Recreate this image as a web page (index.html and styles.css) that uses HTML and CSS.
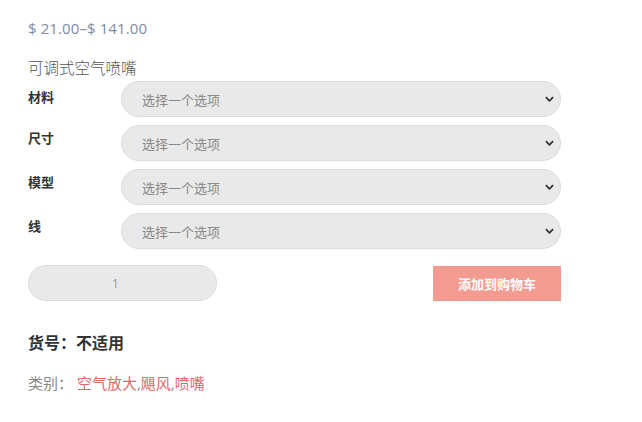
FILE: index.html
```html
<!DOCTYPE html>
<html lang="zh">
<head>
<meta charset="utf-8">
<link rel="stylesheet" href="styles.css">
</head>
<body>
<div class="summary">
  <p class="price">$ 21.00–$ 141.00</p>
  <p class="title">可调式空气喷嘴</p>
  <div class="variations">
    <div class="row">
      <label class="lbl">材料</label>
      <div class="sel"><select><option>选择一个选项</option></select><svg class="chev" viewBox="0 0 10 6"><path d="M1 1l4 4 4-4" fill="none" stroke="#333" stroke-width="2"/></svg></div>
    </div>
    <div class="row">
      <label class="lbl">尺寸</label>
      <div class="sel"><select><option>选择一个选项</option></select><svg class="chev" viewBox="0 0 10 6"><path d="M1 1l4 4 4-4" fill="none" stroke="#333" stroke-width="2"/></svg></div>
    </div>
    <div class="row">
      <label class="lbl">模型</label>
      <div class="sel"><select><option>选择一个选项</option></select><svg class="chev" viewBox="0 0 10 6"><path d="M1 1l4 4 4-4" fill="none" stroke="#333" stroke-width="2"/></svg></div>
    </div>
    <div class="row">
      <label class="lbl">线</label>
      <div class="sel"><select><option>选择一个选项</option></select><svg class="chev" viewBox="0 0 10 6"><path d="M1 1l4 4 4-4" fill="none" stroke="#333" stroke-width="2"/></svg></div>
    </div>
  </div>
  <div class="cart">
    <input class="qty" type="text" value="1">
    <button class="add">添加到购物车</button>
  </div>
  <p class="sku">货号：不适用</p>
  <p class="cats">类别： <a href="#">空气放大</a>,<a href="#">飓风</a>,<a href="#">喷嘴</a></p>
</div>
</body>
</html>
```

FILE: styles.css
```css
* { box-sizing: border-box; }
body {
  margin: 0;
  background: #fff;
  font-family: "Open Sans", "Noto Sans CJK SC", sans-serif;
  color: #555;
}
.summary {
  width: 533px;
  margin-left: 28px;
  padding-top: 17px;
}
.price {
  margin: 0;
  font-size: 15px;
  line-height: 22px;
  letter-spacing: 0.1px;
  color: #7d8ba6;
}
.title {
  margin: 18px 0 0;
  font-size: 15.5px;
  line-height: 22px;
  font-weight: 300;
  color: #555;
}
.variations {
  display: flex;
  flex-direction: column;
  gap: 8px;
  margin-top: 2px;
}
.row {
  display: flex;
  align-items: flex-start;
}
.lbl {
  width: 93px;
  padding-top: 4px;
  font-size: 13px;
  line-height: 18px;
  font-weight: 700;
  color: #333;
}
.row:first-child .lbl { padding-top: 7px; }
.sel {
  position: relative;
  flex: 1;
}
.sel select {
  appearance: none;
  -webkit-appearance: none;
  display: block;
  width: 100%;
  height: 36px;
  border: 1px solid #dcdcdc;
  border-radius: 18px;
  background: #e9e9e9;
  padding: 0 20px;
  font-family: "Noto Sans CJK SC", sans-serif;
  font-size: 13px;
  color: #888;
}
.chev {
  position: absolute;
  right: 7px;
  top: 15px;
  width: 9px;
  height: 6px;
}
.cart {
  display: flex;
  justify-content: space-between;
  align-items: center;
  margin-top: 16px;
}
.qty {
  width: 189px;
  height: 36px;
  border: 1px solid #dcdcdc;
  border-radius: 18px;
  background: #e9e9e9;
  padding: 0 14px 0 0;
  text-align: center;
  font-family: "Open Sans", sans-serif;
  font-size: 12px;
  color: #999;
}
.add {
  width: 128px;
  height: 35px;
  border: 0;
  background: #f39b91;
  color: #fff;
  font-family: "Noto Sans CJK SC", sans-serif;
  font-weight: 700;
  font-size: 13px;
}
.sku {
  margin: 31px 0 0;
  font-size: 16px;
  line-height: 22px;
  font-weight: 700;
  color: #333;
}
.cats {
  margin: 18px 0 0;
  font-size: 15px;
  line-height: 22px;
  color: #888;
}
.cats a {
  color: #e0686a;
  text-decoration: none;
}
```
